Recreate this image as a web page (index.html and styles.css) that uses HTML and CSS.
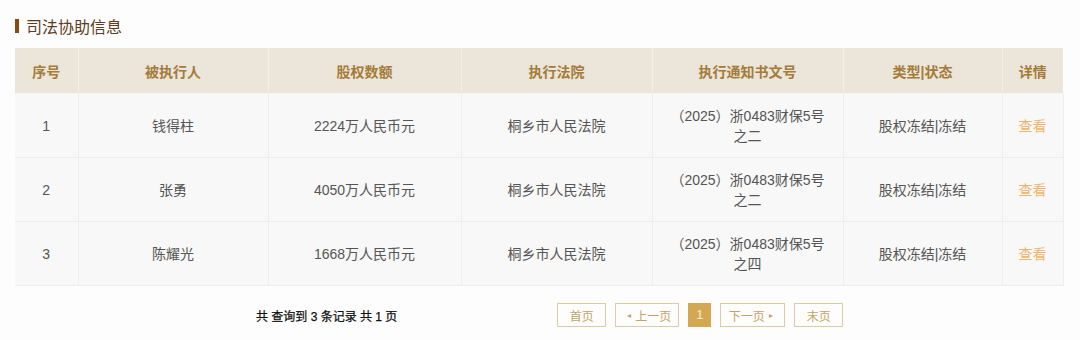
FILE: index.html
```html
<!DOCTYPE html>
<html lang="zh-CN">
<head>
<meta charset="utf-8">
<title>司法协助信息</title>
<link rel="stylesheet" href="styles.css">
</head>
<body>
<div class="page">
  <h2 class="title"><span class="title-bar"></span>司法协助信息</h2>
  <table class="grid">
    <colgroup>
      <col class="c1"><col class="c2"><col class="c3"><col class="c4"><col class="c5"><col class="c6"><col class="c7">
    </colgroup>
    <thead>
      <tr><th>序号</th><th>被执行人</th><th>股权数额</th><th>执行法院</th><th>执行通知书文号</th><th>类型|状态</th><th>详情</th></tr>
    </thead>
    <tbody>
      <tr><td>1</td><td>钱得柱</td><td>2224万人民币元</td><td>桐乡市人民法院</td><td class="doc">（2025）浙0483财保5号之二</td><td>股权冻结|冻结</td><td><a class="link">查看</a></td></tr>
      <tr><td>2</td><td>张勇</td><td>4050万人民币元</td><td>桐乡市人民法院</td><td class="doc">（2025）浙0483财保5号之二</td><td>股权冻结|冻结</td><td><a class="link">查看</a></td></tr>
      <tr><td>3</td><td>陈耀光</td><td>1668万人民币元</td><td>桐乡市人民法院</td><td class="doc">（2025）浙0483财保5号之四</td><td>股权冻结|冻结</td><td><a class="link">查看</a></td></tr>
    </tbody>
  </table>
  <div class="footer">
    <div class="info">共 查询到 3 条记录 共 1 页</div>
    <div class="pager">
      <span class="pbtn w49">首页</span>
      <span class="pbtn w64"><span class="arr">&#9666;</span>上一页</span>
      <span class="pbtn active">1</span>
      <span class="pbtn w65">下一页<span class="arr">&#9656;</span></span>
      <span class="pbtn w49">末页</span>
    </div>
  </div>
</div>
</body>
</html>
```
FILE: styles.css
```css
html, body {
  margin: 0;
  padding: 0;
  background: #fdfdfd;
}
body {
  font-family: "Liberation Sans", "Noto Sans CJK SC", sans-serif;
  color: #555;
}
.page {
  width: 1048px;
  padding: 15px 0 0 15px;
}
.title {
  margin: 0;
  display: flex;
  align-items: center;
  height: 22px;
  font-size: 16px;
  font-weight: normal;
  color: #5e3c20;
  letter-spacing: 0;
}
.title-bar {
  width: 4px;
  height: 14px;
  background: #8a4a18;
  margin-right: 7px;
}
.grid {
  margin-top: 11px;
  width: 1048px;
  border-collapse: collapse;
  table-layout: fixed;
  font-size: 14px;
}
.c1 { width: 63px; }
.c2 { width: 190px; }
.c3 { width: 193px; }
.c4 { width: 191px; }
.c5 { width: 191px; }
.c6 { width: 159px; }
.c7 { width: 61px; }
.grid th {
  height: 45px;
  padding: 0;
  background: #ebe5da;
  color: #a47b38;
  font-weight: bold;
  border-left: 1px solid #f3eee6;
  border-bottom: 1px solid #f7f5f1;
}
.grid th:first-child { border-left: none; }
.grid td {
  height: 63px;
  padding: 0 10px;
  text-align: center;
  background: #f8f8f8;
  border: 1px solid #eeeeee;
  line-height: 20px;
  color: #555;
}
.grid td.doc { padding: 0 17px; }
.grid td:first-child { border-left: none; }
.link {
  color: #efb46b;
  text-decoration: none;
}
.footer {
  display: flex;
  align-items: center;
  padding: 17px 0 0 241px;
  gap: 160px;
}
.info {
  font-size: 12px;
  color: #111;
  font-weight: normal;
  letter-spacing: 0;
  white-space: pre;
  -webkit-text-stroke: 0.25px #111;
}
.pager {
  display: flex;
  gap: 9px;
}
.pbtn {
  box-sizing: border-box;
  height: 24px;
  display: flex;
  align-items: center;
  justify-content: center;
  border: 1px solid #dccca5;
  color: #c4a466;
  font-size: 12px;
  background: #fdfdfd;
}
.w49 { width: 49px; }
.w64 { width: 64px; }
.w65 { width: 65px; }
.arr {
  font-size: 8px;
  margin: 0 4px;
  color: #c4a466;
}
.active {
  width: 23px;
  background: #d4a753;
  border-color: #d4a753;
  color: #fbeed5;
}
```
